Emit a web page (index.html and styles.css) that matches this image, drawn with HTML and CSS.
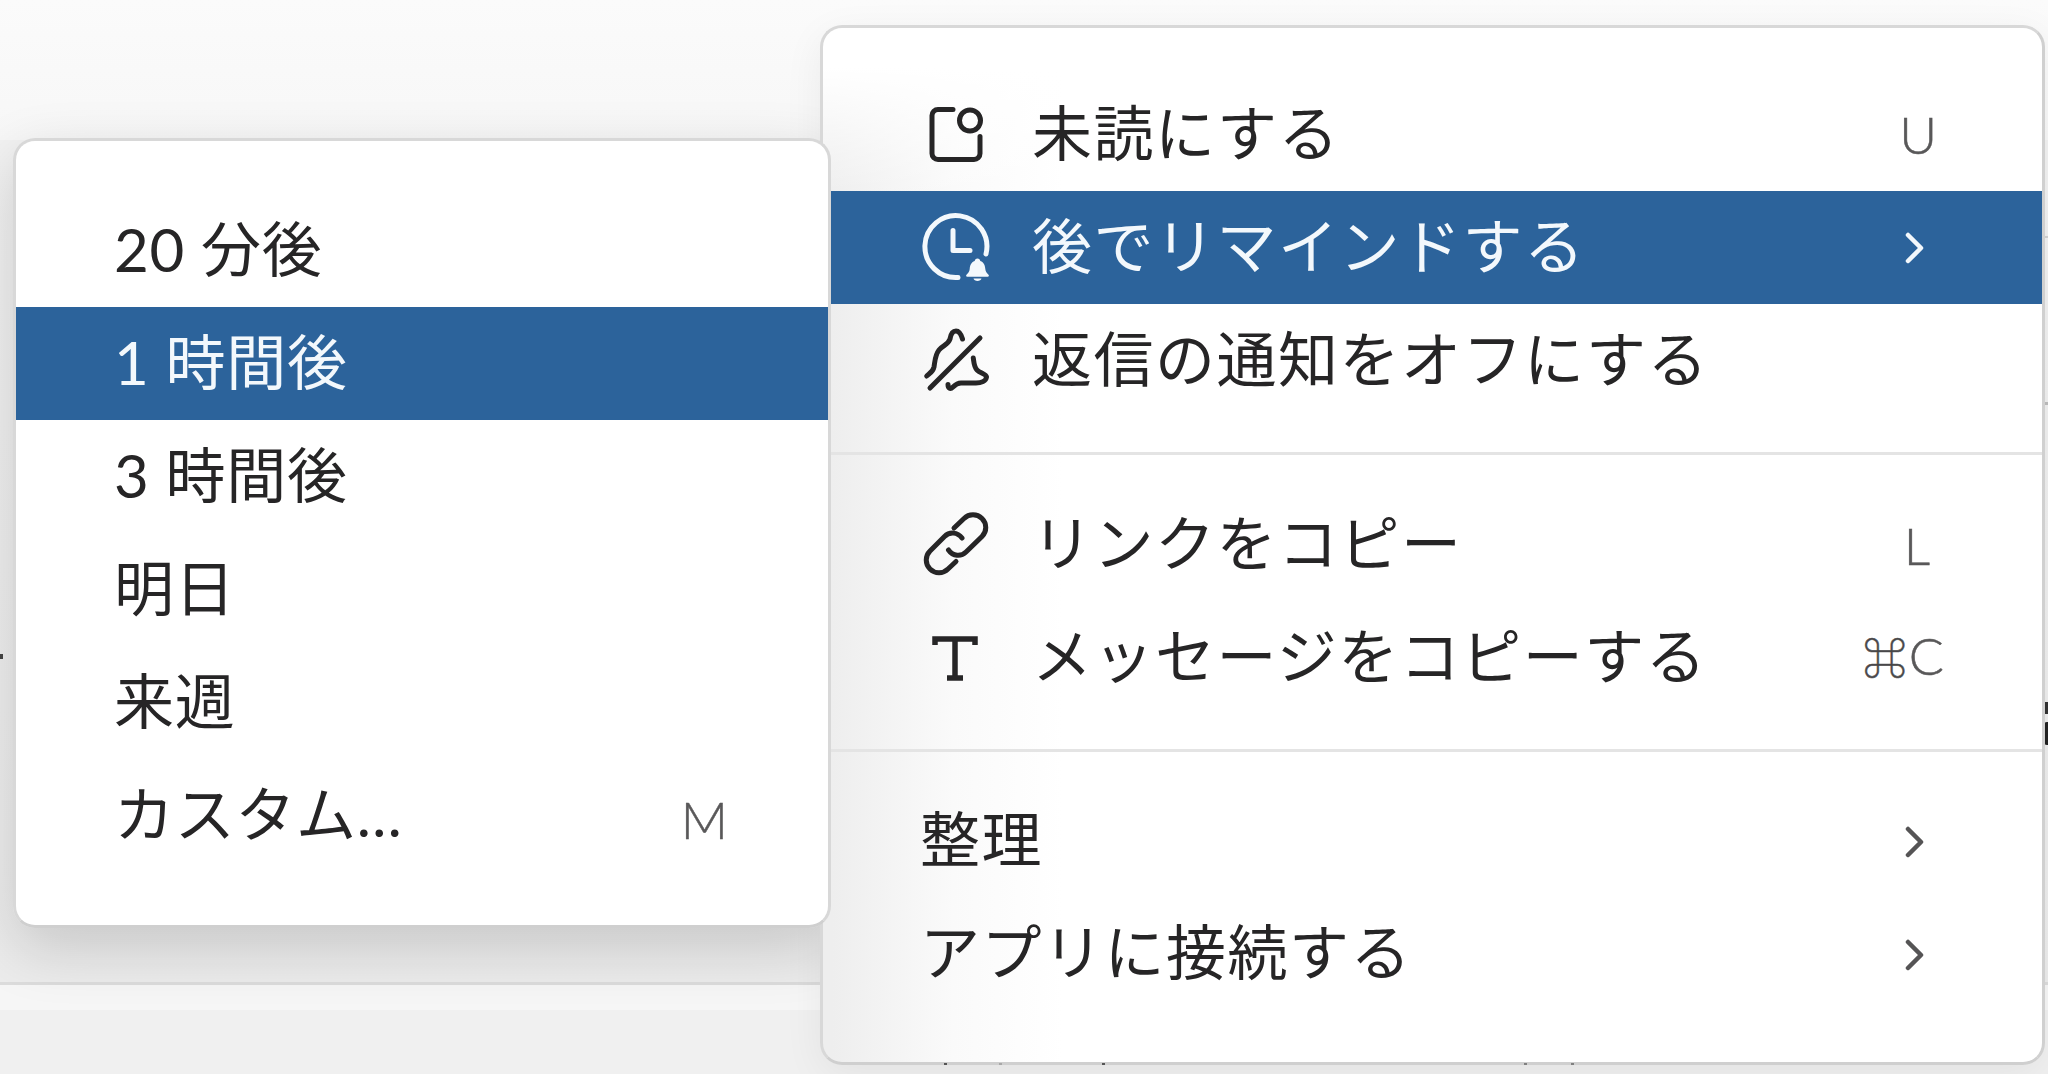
FILE: index.html
```html
<!DOCTYPE html>
<html lang="ja">
<head>
<meta charset="utf-8">
<title>メニュー</title>
<link rel="stylesheet" href="styles.css">
</head>
<body>
<div class="backdrop">
  <div class="backdrop-top"></div>
  <div class="backdrop-mid"></div>
  <div class="backdrop-line"></div>
  <div class="backdrop-band"></div>
  <div class="backdrop-rest"></div>
</div>
<span class="mark mark-edge-a"></span>
<span class="mark mark-edge-b"></span>
<span class="mark mark-glyph-a"></span>
<span class="mark mark-glyph-b"></span>
<span class="mark mark-left"></span>

<div class="sub-shadow"></div>

<div class="menu menu-main">
  <div class="group group-a">
    <div class="row">
      <svg class="icon" viewBox="0 0 72 72"><path d="M32 10.500H17a6 6 0 0 0-6 6v38a6 6 0 0 0 6 6h36a6 6 0 0 0 6-6V37.500"/><circle cx="49" cy="21.500" r="10.500"/></svg>
      <span class="label">未読にする</span>
      <span class="key key-u">U</span>
    </div>
    <div class="row selected">
      <svg class="icon" viewBox="0 0 72 72"><path d="M65 42A31 31 0 1 0 37 65.500"/><path d="M32 18.500v20h17"/><path class="fill" d="M56.500 46.500c1.600 0 2.600 1 2.800 2.500 3.700 1.200 4.700 4.500 5 8 .2 2.600 1.600 4.200 3.200 5.700.8.800.4 2-.8 2H46.300c-1.200 0-1.600-1.200-.8-2 1.600-1.500 3-3.100 3.200-5.700.3-3.500 1.300-6.800 5-8 .2-1.500 1.200-2.500 2.800-2.500zM52.500 66.500h8c-.3 1.400-2 2.500-4 2.500s-3.700-1.100-4-2.500z"/></svg>
      <span class="label">後でリマインドする</span>
      <svg class="chevron" viewBox="0 0 20 32"><path d="M3 3l13 13L3 29"/></svg>
    </div>
    <div class="row">
      <svg class="icon" viewBox="0 0 72 72"><path d="M5.700 51C9 48 12 47 13 42c1-6 1-12 5-17 4-5 9-5 11-11 1-6 3-8 6-8s5 3 6.500 8"/><path d="M52.300 33c.7 5 .7 9 3.700 12s9 4 9.500 7c-.5 4-5.500 6-10.500 6H40c-4 0-6 2-8 4-3 3-5 1-5-2.500"/><path d="M9 63l50-50"/></svg>
      <span class="label">返信の通知をオフにする</span>
    </div>
  </div>
  <div class="divider"></div>
  <div class="group group-b">
    <div class="row">
      <svg class="icon" viewBox="0 0 72 72"><path d="M33 21l10-9.500c5-5 13-5 18 0s5 13 0 18L45 45c-5 5-13 4.500-17.500-2"/><path d="M41 31c-4.500-6-12.500-6.500-17.500-1.500L9 44c-5 5-5 13 0 18s13 5 18 0l8-7.500"/></svg>
      <span class="label">リンクをコピー</span>
      <span class="key key-l">L</span>
    </div>
    <div class="row">
      <svg class="icon icon-t" viewBox="0 0 72 72"><path d="M14 25v-6h40v6"/><path d="M34 19v39"/><path d="M26 58h16"/></svg>
      <span class="label">メッセージをコピーする</span>
      <span class="key key-c"><span class="cmd">⌘</span>C</span>
    </div>
  </div>
  <div class="divider"></div>
  <div class="group group-c">
    <div class="row">
      <span class="label">整理</span>
      <svg class="chevron" viewBox="0 0 20 32"><path d="M3 3l13 13L3 29"/></svg>
    </div>
    <div class="row">
      <span class="label">アプリに接続する</span>
      <svg class="chevron" viewBox="0 0 20 32"><path d="M3 3l13 13L3 29"/></svg>
    </div>
  </div>
</div>

<div class="menu menu-sub">
  <div class="row"><span class="label">20 分後</span></div>
  <div class="row selected"><span class="label">1 時間後</span></div>
  <div class="row"><span class="label">3 時間後</span></div>
  <div class="row"><span class="label">明日</span></div>
  <div class="row"><span class="label">来週</span></div>
  <div class="row"><span class="label">カスタム…</span><span class="key key-m">M</span></div>
</div>

<span class="mark dot dot-a"></span>
<span class="mark dot dot-b"></span>
<span class="mark dot dot-c"></span>
<span class="mark dot dot-d"></span>
<span class="mark dot dot-e"></span>
</body>
</html>
```
FILE: styles.css
```css
* { box-sizing: border-box; }

html, body {
  margin: 0;
  width: 2048px;
  height: 1074px;
  overflow: hidden;
  background: #ffffff;
}

body {
  position: relative;
  font-family: Lato, "Noto Sans CJK JP", "DejaVu Sans", sans-serif;
  color: #262526;
}

.backdrop {
  display: flex;
  flex-direction: column;
  height: 1074px;
}
.backdrop-top {
  height: 140px;
  background: linear-gradient(180deg, #fbfbfb 0%, #f7f7f7 100%);
}
.backdrop-mid {
  flex: 1;
  background: linear-gradient(180deg, #f2f2f2 0%, #ececec 100%);
}
.backdrop-line { height: 3px; background: #dcdcdc; }
.backdrop-band { height: 25px; background: #f6f6f6; }
.backdrop-rest { height: 64px; background: #f0f0f0; }

.mark { position: absolute; }
.mark-edge-a { left: 2044px; top: 236px; width: 4px; height: 2px; background: #d2d2d2; }
.mark-edge-b { left: 2044px; top: 402px; width: 4px; height: 3px; background: #bdbdbd; }
.mark-glyph-a { left: 2045px; top: 702px; width: 3px; height: 12px; background: #333333; }
.mark-glyph-b { left: 2044px; top: 722px; width: 4px; height: 23px; background: #222222; border-radius: 3px 0 0 3px; }
.mark-left { left: 0; top: 654px; width: 3px; height: 5px; background: #444444; }

.dot { top: 1063px; width: 3px; height: 2px; background: #555555; }
.dot-a { left: 944px; }
.dot-b { left: 999px; background: #a8a8a8; }
.dot-c { left: 1102px; }
.dot-d { left: 1524px; background: #808080; }
.dot-e { left: 1571px; background: #808080; }

.sub-shadow {
  position: absolute;
  left: 13px;
  top: 138px;
  width: 818px;
  height: 790px;
  border-radius: 22px;
  box-shadow: 0 20px 60px rgba(0, 0, 0, .16);
}

.menu {
  position: absolute;
  background: #ffffff;
  border: 3px solid #d8d8d8;
  border-radius: 22px;
  overflow: hidden;
  font-size: 60px;
  letter-spacing: 1.500px;
}

.menu-main {
  left: 820px;
  top: 25px;
  width: 1225px;
  height: 1040px;
  border-bottom-color: #cfcfcf;
  border-right-color: #d0d0d0;
  background:
    linear-gradient(180deg, #ffffff 40px, rgba(255, 255, 255, 0) 170px),
    linear-gradient(90deg, #eeeeee 10px, #f3f3f3 60px, #fafafa 130px, #ffffff 240px);
  box-shadow: 0 10px 40px rgba(0, 0, 0, .06);
}

.menu-sub {
  left: 13px;
  top: 138px;
  width: 818px;
  height: 790px;
  padding-top: 53px;
  border-bottom-color: #cfcfcf;
  letter-spacing: .700px;
}

.group-a { padding: 50px 0 35px; }
.group-b { padding: 31px 0 37px; }
.group-c { padding: 33px 0 50px; }

.divider { height: 3px; background: #e4e4e4; }

.row {
  display: flex;
  align-items: center;
  height: 113px;
  padding-left: 98px;
  white-space: nowrap;
}
.menu-sub .row { padding-left: 98px; }
.group-c .row { padding-left: 97px; }

.row .icon {
  width: 72px;
  height: 72px;
  margin-right: 39px;
  flex: none;
  fill: none;
  stroke: currentColor;
  stroke-width: 5;
  stroke-linecap: round;
  stroke-linejoin: round;
}
.row .icon .fill { fill: currentColor; stroke: none; }
.row .icon-t { stroke-width: 5.500; stroke-linecap: butt; stroke-linejoin: miter; }

.label { flex: 1; padding-bottom: 10px; }
.group-b .label { padding-bottom: 7px; }
.group-c .label { padding-bottom: 12px; }

.selected {
  background: #2c639b;
  color: #f3f8fc;
}

.key {
  color: #595859;
  font-size: 52px;
  font-weight: 300;
  letter-spacing: 0;
  -webkit-text-stroke: .5px #595859;
}
.key-u { margin-right: 105px; margin-bottom: 2px; }
.key-l { margin-right: 112px; margin-top: 5px; }
.key-c { margin-right: 98px; }
.key-m { margin-right: 100px; margin-top: 6px; }
.cmd { font-size: 44px; color: #444344; margin-right: 2px; }

.chevron {
  width: 20px;
  height: 32px;
  margin-right: 117px;
  flex: none;
  fill: none;
  stroke: #555455;
  stroke-width: 4.500;
  stroke-linecap: round;
  stroke-linejoin: round;
}
.selected .chevron { stroke: #f3f8fc; }
```
